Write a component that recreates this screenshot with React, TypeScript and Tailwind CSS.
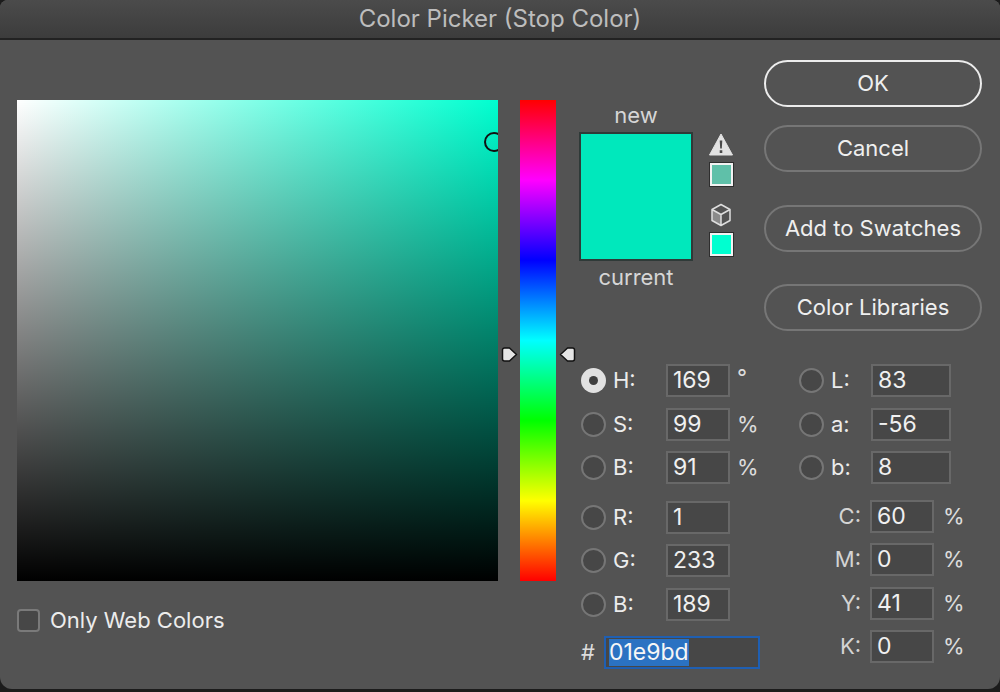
import type { ReactNode } from "react";

const FONT = "font-['Inter','Liberation_Sans',sans-serif]";

function Radio({ on }: { on?: boolean }) {
  if (on) {
    return (
      <span className="grid h-[25px] w-[25px] flex-none place-items-center rounded-full bg-[#e1e1e1]">
        <span className="h-[9px] w-[9px] rounded-full bg-[#3f3f3f]" />
      </span>
    );
  }
  return <span className="h-[25px] w-[25px] flex-none rounded-full border-2 border-[#767676] bg-[#474747]" />;
}

function Input({ value, wide }: { value: string; wide?: boolean }) {
  return (
    <span
      className={`flex h-[33px] flex-none items-center border-2 border-[#686868] bg-[#474747] pl-[5px] text-[23px] leading-none text-[#f0f0f0] ${wide ? "w-[80px]" : "w-[64px]"}`}
    >
      {value}
    </span>
  );
}

// radio + label + box + unit, left block (H S B R G B)
function LeftRow({ label, value, unit, on }: { label: string; value: string; unit?: string; on?: boolean }) {
  return (
    <div className="flex h-[43.5px] items-center">
      <Radio on={on} />
      <span className="ml-[7px] w-[53px] text-[22px] text-[#ececec]">{label}</span>
      <Input value={value} />
      <span className={`ml-[7px] text-[22px] text-[#dcdcdc] ${unit === "°" ? "-mt-[6px]" : ""}`}>{unit}</span>
    </div>
  );
}

function LabRow({ label, value }: { label: string; value: string }) {
  return (
    <div className="flex h-[43.5px] items-center">
      <Radio />
      <span className="ml-[7px] w-[40px] text-[22px] text-[#ececec]">{label}</span>
      <Input value={value} wide />
    </div>
  );
}

function CmykRow({ label, value }: { label: string; value: string }) {
  return (
    <div className="flex h-[43.5px] items-center">
      <span className="w-[62px] text-right text-[22px] text-[#d4d4d4]">{label}</span>
      <span className="ml-[9px]">
        <Input value={value} />
      </span>
      <span className="ml-[9px] text-[22px] text-[#dcdcdc]">%</span>
    </div>
  );
}

function Btn({ children, primary }: { children: ReactNode; primary?: boolean }) {
  return (
    <div
      className={`flex h-[47px] w-[218px] items-center justify-center rounded-[24px] border-2 pb-[1px] text-[22px] text-[#efefef] ${primary ? "border-[#ececec]" : "border-[#767676]"}`}
    >
      {children}
    </div>
  );
}

function Swatch({ color }: { color: string }) {
  return (
    <div className="h-[25px] w-[25px] border border-[#2e2e2e] bg-[#f2f2f2] p-[2px]">
      <div className={`h-full w-full ${color}`} />
    </div>
  );
}

export default function App() {
  return (
    <div className={`h-[692px] w-[1000px] overflow-hidden bg-[#1c1c1c] ${FONT}`}>
      <div className="flex h-[689px] flex-col overflow-hidden rounded-b-[12px] rounded-t-[8px] bg-[#535353]">
        {/* Title bar */}
        <div className="flex h-[40px] flex-none items-center justify-center border-b-2 border-[#222222] bg-[linear-gradient(to_bottom,#4b4b4b,#3c3c3c)] text-[24px] text-[#bdbdbd]">
          Color Picker (Stop Color)
        </div>

        <div className="flex flex-1 pl-[17px]">
          {/* Colour field */}
          <div className="w-[481px] flex-none pt-[60px]">
            <div className="relative h-[481px] w-[481px] overflow-hidden bg-[linear-gradient(to_top,#000000,transparent),linear-gradient(to_right,#ffffff,#00ffd0)]">
              <span className="absolute left-[467px] top-[32px] h-[20px] w-[20px] rounded-full border-2 border-[#111111]" />
            </div>
            <div className="mt-[23px] flex items-center">
              <span className="h-[23px] w-[23px] rounded-[4px] border-2 border-[#7a7a7a] bg-[#474747]" />
              <span className="ml-[10px] text-[22px] text-[#ececec]">Only Web Colors</span>
            </div>
          </div>

          {/* Hue strip */}
          <div className="relative ml-[22px] w-[36px] flex-none pt-[60px]">
            <div className="h-[481px] w-[36px] bg-[linear-gradient(to_bottom,#ff0000,#ff00ff,#0000ff,#00ffff,#00ff00,#ffff00,#ff0000)]" />
            <svg className="absolute left-[-19px] top-[306px]" width="18" height="17" viewBox="0 0 18 17">
              <path d="M3.500 2h5l7 6.500-7 6.500h-5a2 2 0 0 1-2-2V4a2 2 0 0 1 2-2z" fill="#e4e4e4" stroke="#111" strokeWidth="1.5" strokeLinejoin="round" />
            </svg>
            <svg className="absolute left-[38px] top-[306px]" width="18" height="17" viewBox="0 0 18 17">
              <path d="M14.500 2h-5l-7 6.500 7 6.500h5a2 2 0 0 0 2-2V4a2 2 0 0 0-2-2z" fill="#e4e4e4" stroke="#111" strokeWidth="1.5" strokeLinejoin="round" />
            </svg>
          </div>

          {/* Right side */}
          <div className="ml-[24px] flex min-w-0 flex-1 flex-col">
            <div className="flex h-[319px] flex-none">
              <div className="-ml-[1px] w-[114px] flex-none pt-[61px] text-center text-[22px] leading-[28px] text-[#d6d6d6]">
                <div>new</div>
                <div className="mt-[3px] h-[129px] border-2 border-[#2f3a38] bg-[#00e8bc]" />
                <div className="mt-[2px]">current</div>
              </div>
              <div className="ml-[16px] w-[25px] flex-none pt-[93px]">
                <svg className="block" width="24" height="23" viewBox="0 0 24 23">
                  <path d="M12 1 23.500 22H.5z" fill="#e2e2e2" stroke="#e2e2e2" strokeLinejoin="round" />
                  <path d="M10.700 7.500h2.600l-.5 8h-1.600zM10.700 17.300h2.600v2.600h-2.600z" fill="#4a4a4a" />
                </svg>
                <div className="mt-[6px]">
                  <Swatch color="bg-[#5fc0a9]" />
                </div>
                <svg className="mt-[16px] block" width="24" height="24" viewBox="0 0 24 24">
                  <path d="M12 11.500 3 6.500V17.500L12 22.500z" fill="#8a8a8a" />
                  <path d="M12 1.500 21 6.500V17.500L12 22.500 3 17.500V6.500zM3 6.500l9 5 9-5M12 11.500v11" fill="none" stroke="#dedede" strokeWidth="1.500" strokeLinejoin="round" />
                </svg>
                <div className="mt-[5px]">
                  <Swatch color="bg-[#00ffd0]" />
                </div>
              </div>
              <div className="ml-[30px] flex-none pt-[20px]">
                <Btn primary>OK</Btn>
                <div className="mt-[18px]">
                  <Btn>Cancel</Btn>
                </div>
                <div className="mt-[33px]">
                  <Btn>Add to Swatches</Btn>
                </div>
                <div className="mt-[32px]">
                  <Btn>Color Libraries</Btn>
                </div>
              </div>
            </div>

            {/* Value fields */}
            <div className="flex">
              <div className="w-[219px] flex-none pl-[1px]">
                <LeftRow on label="H:" value="169" unit="°" />
                <LeftRow label="S:" value="99" unit="%" />
                <LeftRow label="B:" value="91" unit="%" />
                <div className="mt-[6px]">
                  <LeftRow label="R:" value="1" />
                  <LeftRow label="G:" value="233" />
                  <LeftRow label="B:" value="189" />
                </div>
                <div className="mt-[10px] flex h-[33px] items-center">
                  <span className="w-[23px] text-[22px] text-[#dcdcdc]">#</span>
                  <div className="flex h-[33px] w-[156px] flex-none items-center border-2 border-[#1f5fb2] bg-[#474747] pl-[3px]">
                    <span className="bg-[#2b72c2] text-[23px] leading-[27px] text-[#f6f6f6]">01e9bd</span>
                  </div>
                </div>
              </div>
              <div className="w-[180px] flex-none">
                <LabRow label="L:" value="83" />
                <LabRow label="a:" value="-56" />
                <LabRow label="b:" value="8" />
                <div className="mt-[5px]">
                  <CmykRow label="C:" value="60" />
                  <CmykRow label="M:" value="0" />
                  <CmykRow label="Y:" value="41" />
                  <CmykRow label="K:" value="0" />
                </div>
              </div>
            </div>
          </div>
        </div>
      </div>
    </div>
  );
}
